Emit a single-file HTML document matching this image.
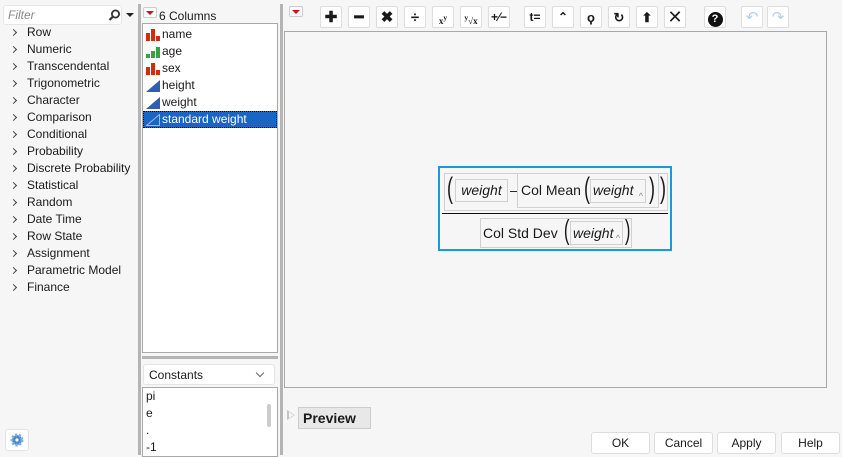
<!DOCTYPE html>
<html><head><style>
*{margin:0;padding:0;box-sizing:border-box;white-space:nowrap}
body{width:842px;height:455px;background:#f6f6f6;font-family:"Liberation Sans",sans-serif;font-size:12px;color:#1a1a1a;position:relative;overflow:hidden}
.a{position:absolute}
.tree div{height:17px;line-height:17px;padding-left:27px;position:relative;font-size:12px}
.tree div:before{content:"";position:absolute;left:11px;top:6px;width:4px;height:4px;border-right:1.3px solid #444;border-top:1.3px solid #444;transform:rotate(45deg)}
.cols div{height:17px;line-height:17px;padding-left:19px;position:relative}
.tb{position:absolute;top:6px;width:22px;height:22px;background:#fff;border:1px solid #ddd;border-radius:2px;text-align:center;line-height:21px;font-weight:bold;font-size:15px}
.btn{position:absolute;top:432px;height:22px;background:#fff;border:1px solid #ddd;border-radius:3px;text-align:center;line-height:21px;font-size:12px}
i{font-style:italic}
.car{position:absolute;right:2px;bottom:1px;font-size:9px;color:#888;line-height:9px}
</style></head><body>
<div class="a" style="left:3px;top:5px;width:119px;height:20px;background:#fff;border:1px solid #e6e6e6;border-radius:3px;color:#888;font-style:italic;padding-left:4px;line-height:18px">Filter
<svg class="a" style="left:104px;top:3px" width="13" height="13"><circle cx="7.5" cy="5" r="3.6" fill="none" stroke="#333" stroke-width="1.8"/><path d="M5 7.5L1.5 11" stroke="#333" stroke-width="2.2"/></svg></div>
<div class="a" style="left:126px;top:13px;border-left:4px solid transparent;border-right:4px solid transparent;border-top:4px solid #222"></div>
<div class="a tree" style="left:0;top:24px;width:138px">
<div>Row</div><div>Numeric</div><div>Transcendental</div><div>Trigonometric</div><div>Character</div><div>Comparison</div><div>Conditional</div><div>Probability</div><div>Discrete Probability</div><div>Statistical</div><div>Random</div><div>Date Time</div><div>Row State</div><div>Assignment</div><div>Parametric Model</div><div>Finance</div></div>
<div class="a" style="left:5px;top:429px;width:24px;height:22px;background:#fff;border:1px solid #e2e2e2;border-radius:3px"><svg width="22" height="20"><circle cx="11" cy="10" r="5" fill="#4a86c8" stroke="#7fb0e0" stroke-width="3" stroke-dasharray="2 1.6"/><circle cx="11" cy="10" r="1.6" fill="#fff"/></svg></div>
<div class="a" style="left:138px;top:4px;width:3px;height:451px;background:#b4b4b4"></div>
<div class="a" style="left:280px;top:4px;width:3px;height:451px;background:#b4b4b4"></div>
<div class="a" style="left:143px;top:7px;width:14px;height:11px;background:#fff;border:1px solid #ccc;border-radius:2px"><div class="a" style="left:2px;top:3px;border-left:4px solid transparent;border-right:4px solid transparent;border-top:4px solid #d01010"></div></div>
<div class="a" style="left:159px;top:9px;font-size:12px">6 Columns</div>
<div class="a cols" style="left:142px;top:23px;width:136px;height:330px;background:#fff;border:1px solid #a8a8a8;padding-top:2px">
<div><svg class="a" style="left:3px;top:3px" width="14" height="12"><path d="M0 4h4v8H0zM5 0h4v12H5zM10 7h4v5h-4z" fill="#d02c10"/></svg>name</div>
<div><svg class="a" style="left:3px;top:3px" width="14" height="12"><path d="M0 8h4v4H0zM5 5h4v7H5zM10 1h4v11h-4z" fill="#3aa040"/></svg>age</div>
<div><svg class="a" style="left:3px;top:3px" width="14" height="12"><path d="M0 4h4v8H0zM5 0h4v12H5zM10 7h4v5h-4z" fill="#d02c10"/></svg>sex</div>
<div><svg class="a" style="left:3px;top:3px" width="14" height="12"><path d="M0 12L14 0v12z" fill="#2f5fb0"/></svg>height</div>
<div><svg class="a" style="left:3px;top:3px" width="14" height="12"><path d="M0 12L14 0v12z" fill="#2f5fb0"/></svg>weight</div>
<div style="background:#1a64c4;color:#fff;outline:1px dotted #000;outline-offset:-1px"><svg class="a" style="left:3px;top:3px" width="14" height="12"><path d="M0.5 11.5L13.5 0.5v11z" fill="none" stroke="#9fb8e0"/></svg>standard weight</div>
</div>
<div class="a" style="left:142px;top:356px;width:136px;height:3px;background:#b4b4b4"></div>
<div class="a" style="left:143px;top:364px;width:132px;height:21px;background:#fff;border:1px solid #e4e4e4;border-radius:3px;padding-left:5px;line-height:20px">Constants<span class="a" style="left:113px;top:5px;width:6px;height:6px;border-right:1px solid #666;border-bottom:1px solid #666;transform:rotate(45deg)"></span></div>
<div class="a" style="left:142px;top:387px;width:136px;height:70px;background:#fff;border:1px solid #a8a8a8;padding-left:3px;line-height:17px">pi<br>e<br>.<br>-1
<div class="a" style="left:124px;top:16px;width:4px;height:23px;background:#ccc;border-radius:2px"></div></div>
<div class="a" style="left:289px;top:6px;width:14px;height:11px;background:#fff;border:1px solid #ccc;border-radius:2px"><div class="a" style="left:2px;top:3px;border-left:4px solid transparent;border-right:4px solid transparent;border-top:4px solid #d01010"></div></div>
<div class="tb" style="left:320px">✚</div>
<div class="tb" style="left:348px">━</div>
<div class="tb" style="left:376px">✖</div>
<div class="tb" style="left:404px">÷</div>
<div class="tb" style="left:432px;font-size:9px;font-family:'Liberation Serif'">x<sup>y</sup></div>
<div class="tb" style="left:460px;font-size:9px;font-family:'Liberation Serif'"><sup>y</sup>√x</div>
<div class="tb" style="left:488px;font-size:12px">+⁄−</div>
<div class="tb" style="left:524px;font-size:12px">t=</div>
<div class="tb" style="left:552px;font-size:12px">⌃</div>
<div class="tb" style="left:580px;font-size:13px">ϙ</div>
<div class="tb" style="left:608px;font-size:13px">↻</div>
<div class="tb" style="left:636px;font-size:13px">⬆</div>
<div class="tb" style="left:664px;font-weight:normal;font-size:18px">✕</div>
<div class="tb" style="left:704px"><span style="display:inline-block;width:15px;height:15px;border-radius:50%;background:#111;color:#fff;font-size:11px;line-height:15px;margin-top:3px">?</span></div>
<div class="tb" style="left:741px;color:#b8cde8;font-weight:normal">↶</div>
<div class="tb" style="left:767px;color:#b8cde8;font-weight:normal">↷</div>
<div class="a" style="left:284px;top:31px;width:543px;height:357px;background:#f6f6f6;border:1px solid #a8a8a8"></div>
<div class="a" style="left:438px;top:166px;width:234px;height:85px;border:2px solid #1a9ad6;background:#f6f6f6;font-family:'Liberation Sans',sans-serif;font-size:14px">
<div class="a" style="left:4px;top:5px;width:224px;height:38px;border:1px solid #d0d0d0"></div>
<div class="a" style="left:5px;top:4px;font-size:30px;transform:scaleX(.6)">(</div>
<div class="a" style="left:15px;top:11px;width:53px;height:23px;border:1px solid #d0d0d0;line-height:21px;text-align:center"><i>weight</i></div>
<div class="a" style="left:70px;top:14px">–</div>
<div class="a" style="left:77px;top:5px;width:142px;height:35px;border:1px solid #d0d0d0"></div>
<div class="a" style="left:81px;top:14px">Col Mean</div>
<div class="a" style="left:142px;top:4px;font-size:30px;transform:scaleX(.6)">(</div>
<div class="a" style="left:150px;top:11px;width:56px;height:24px;border:1px solid #d0d0d0;line-height:21px;padding-left:2px"><i>weight</i><span class="car">^</span></div>
<div class="a" style="left:207px;top:4px;font-size:30px;transform:scaleX(.6)">)</div>
<div class="a" style="left:218px;top:4px;font-size:30px;transform:scaleX(.6)">)</div>
<div class="a" style="left:2px;top:45px;width:226px;height:1px;background:#111"></div>
<div class="a" style="left:40px;top:50px;width:152px;height:30px;border:1px solid #d0d0d0"></div>
<div class="a" style="left:43px;top:57px">Col Std Dev</div>
<div class="a" style="left:122px;top:46px;font-size:28px;transform:scaleX(.6)">(</div>
<div class="a" style="left:130px;top:53px;width:53px;height:24px;border:1px solid #d0d0d0;line-height:22px;padding-left:2px"><i>weight</i><span class="car">^</span></div>
<div class="a" style="left:183px;top:46px;font-size:28px;transform:scaleX(.6)">)</div>
</div>
<div class="a" style="left:287px;top:410px;border-top:5px solid transparent;border-bottom:5px solid transparent;border-left:8px solid #c4c4c4"></div>
<div class="a" style="left:289px;top:412px;border-top:3px solid transparent;border-bottom:3px solid transparent;border-left:5px solid #f6f6f6"></div>
<div class="a" style="left:298px;top:407px;width:73px;height:22px;background:#e8e8e8;border:1px solid #ccc;font-weight:bold;font-size:14px;line-height:20px;padding-left:4px">Preview</div>
<div class="btn" style="left:591px;width:59px">OK</div>
<div class="btn" style="left:654px;width:59px">Cancel</div>
<div class="btn" style="left:717px;width:59px">Apply</div>
<div class="btn" style="left:781px;width:59px">Help</div>
</body></html>
